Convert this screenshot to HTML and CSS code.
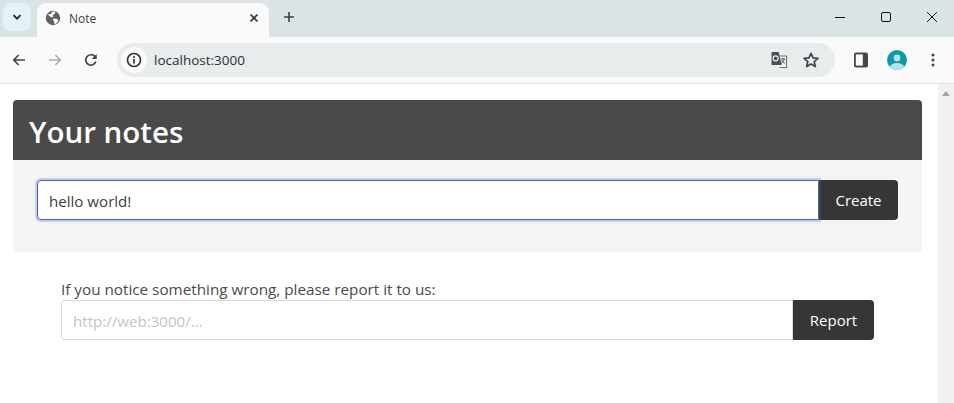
FILE: index.html
```html
<!DOCTYPE html>
<html lang="en">
<head>
<meta charset="utf-8">
<title>Note</title>
<link rel="stylesheet" href="styles.css">
</head>
<body>
<div class="browser">
  <div class="tabstrip">
    <div class="tabsearch">
      <svg width="12" height="12" viewBox="0 0 12 12"><path d="M2.5 4.2 6 7.7l3.5-3.5" fill="none" stroke="#1f2a30" stroke-width="1.9"/></svg>
    </div>
    <div class="tab">
      <svg class="favicon" width="16" height="16" viewBox="0 0 16 16"><circle cx="8" cy="8" r="7.2" fill="#5f6368"/><path d="M3 4.2 6 4l1.5-2.6 3 .2-.8 2.2-2 1.2.6 1.6-1.6.9L4 5.8zM8.6 8.4l3.6.6 1.2 2-2.6 3-1.6-.4-.2-2.6-1.2-1.2z" fill="#fafafa"/></svg>
      <span class="tabtitle">Note</span>
      <svg class="tabclose" width="10" height="10" viewBox="0 0 10 10"><path d="M1.5 1.5l7 7M8.5 1.5l-7 7" stroke="#30353a" stroke-width="1.7"/></svg>
    </div>
    <svg class="newtab" width="12" height="12" viewBox="0 0 12 12"><path d="M6 1v10M1 6h10" stroke="#3c4449" stroke-width="1.6"/></svg>
    <div class="winctrls">
      <svg width="12" height="12" viewBox="0 0 12 12"><path d="M1 6.5h10" stroke="#111" stroke-width="1"/></svg>
      <svg width="12" height="12" viewBox="0 0 12 12"><rect x="1.5" y="1.5" width="9" height="9" rx="1.5" fill="none" stroke="#111" stroke-width="1"/></svg>
      <svg width="12" height="12" viewBox="0 0 12 12"><path d="M1 1l10 10M11 1 1 11" stroke="#111" stroke-width="1"/></svg>
    </div>
  </div>
  <div class="toolbar">
    <svg class="navicon" width="16" height="16" viewBox="0 0 16 16"><path d="M14 8H3M7.6 3 2.8 8l4.8 5" fill="none" stroke="#41474c" stroke-width="1.7"/></svg>
    <svg class="navicon" width="16" height="16" viewBox="0 0 16 16"><path d="M2 8h11M8.4 3l4.8 5-4.8 5" fill="none" stroke="#a9adb0" stroke-width="1.7"/></svg>
    <svg class="navicon" width="16" height="16" viewBox="0 0 16 16"><path d="M12.9 9.6A5.2 5.2 0 1 1 11.8 4.4L13 5.8" fill="none" stroke="#41474c" stroke-width="1.7"/><path d="M13.7 2v5h-5z" fill="#41474c"/></svg>
    <div class="omnibox">
      <div class="siteinfo">
        <svg width="16" height="16" viewBox="0 0 16 16"><circle cx="8" cy="8" r="6.5" fill="none" stroke="#2c3135" stroke-width="1.6"/><path d="M8 7v4.4" stroke="#2c3135" stroke-width="1.7"/><circle cx="8" cy="4.9" r="1" fill="#2c3135"/></svg>
      </div>
      <span class="url">localhost:3000</span>
      <svg class="translate" width="18" height="18" viewBox="0 0 18 18"><path d="M1 1.5h8.5l1 3H16a1 1 0 0 1 1 1V17H7.5l-1-3H1z" fill="#f1f3f4"/><path d="M1.5 1h7.2l3 13H1.5z" fill="#4b5054"/><path d="M8 5h8.5v11.5H9.5" fill="none" stroke="#6c7276" stroke-width="1.1"/><circle cx="5.6" cy="7.4" r="2.5" fill="none" stroke="#e8eaeb" stroke-width="1.2"/><path d="M11 8h4M13 7v1M14.4 8c-.5 2-2 3.6-3.4 4.4M11.8 9.2c.6 1.3 1.8 2.5 3 3" fill="none" stroke="#4b5054" stroke-width="1"/></svg>
      <svg class="star" width="18" height="18" viewBox="0 0 18 18"><path d="M9 2.3l2 4.6 5 .5-3.8 3.3 1.2 4.9L9 13l-4.4 2.6 1.2-4.9L2 7.4l5-.5z" fill="none" stroke="#3f4549" stroke-width="1.7" stroke-linejoin="round"/></svg>
    </div>
    <svg class="sidepanel" width="16" height="16" viewBox="0 0 16 16"><rect x="1" y=".5" width="14" height="15" rx="2" fill="#41474c"/><rect x="2.8" y="2.4" width="7" height="11.2" fill="#fafafa"/></svg>
    <svg class="avatar" width="20" height="20" viewBox="0 0 20 20"><defs><clipPath id="av"><circle cx="10" cy="10" r="10"/></clipPath></defs><g clip-path="url(#av)"><rect width="20" height="20" fill="#0b9aa8"/><circle cx="10" cy="8" r="3.4" fill="#b6e3e6"/><ellipse cx="10" cy="18" rx="7.5" ry="5" fill="#b6e3e6"/></g></svg>
    <svg class="menu" width="4" height="14" viewBox="0 0 4 14"><circle cx="2" cy="2" r="1.5" fill="#41474c"/><circle cx="2" cy="7" r="1.5" fill="#41474c"/><circle cx="2" cy="12" r="1.5" fill="#41474c"/></svg>
  </div>
  <div class="viewport">
    <main class="page">
      <section class="notes">
        <h1 class="notes-title">Your notes</h1>
        <form class="notes-body">
          <div class="inputgroup">
            <input class="field field-focus" type="text" value="hello world!">
            <button class="btn" type="button">Create</button>
          </div>
        </form>
      </section>
      <section class="report">
        <label class="report-label">If you notice something wrong, please report it to us:</label>
        <div class="inputgroup">
          <input class="field" type="text" placeholder="http://web:3000/...">
          <button class="btn" type="button">Report</button>
        </div>
      </section>
    </main>
    <div class="scrollbar">
      <svg width="8" height="5" viewBox="0 0 8 5"><path d="M4 0l4 5H0z" fill="#a3a3a3"/></svg>
    </div>
  </div>
</div>
</body>
</html>
```
FILE: styles.css
```css
* { box-sizing: border-box; }
html, body { margin: 0; height: 100%; overflow: hidden; }
body { font-family: "Open Sans", "Noto Sans", sans-serif; color: #212529; background: #fff; }
.browser { display: flex; flex-direction: column; height: 403px; }

.tabstrip { height: 37px; background: #dbe3e7; display: flex; align-items: flex-start; padding: 3px 0 0 3px; position: relative; }
.tabsearch { width: 28px; height: 28px; border-radius: 8px; background: #e3f2f8; display: flex; align-items: center; justify-content: center; }
.tab { width: 232px; height: 34px; margin-left: 6px; background: #fafafa; border-radius: 9px 9px 0 0; display: flex; align-items: center; padding: 0 10px 4px 8px; }
.favicon { flex: none; }
.tabtitle { font: 12px "Open Sans", sans-serif; color: #3c4043; margin-left: 8px; flex: 1; }
.tabclose { flex: none; }
.newtab { margin: 8px 0 0 14px; }
.winctrls { margin-left: auto; display: flex; gap: 34px; padding: 8px 16px 0 0; }

.toolbar { height: 47px; background: #fafafa; border-bottom: 1px solid #dfe1e2; display: flex; align-items: center; padding: 0 0 1px 11px; }
.navicon { flex: none; margin-right: 20px; }
.navicon + .navicon + .navicon { margin-right: 0; margin-left: 0; }
.omnibox { margin-left: 18px; width: 718px; height: 34px; border-radius: 17px; background: #e9ecec; display: flex; align-items: center; padding: 0 15px 0 4px; }
.siteinfo { width: 26px; height: 26px; border-radius: 50%; background: #fafafa; display: flex; align-items: center; justify-content: center; }
.url { font: 13.5px "Open Sans", sans-serif; color: #2b3035; margin-left: 7px; flex: 1; }
.translate { margin-right: 14px; }
.sidepanel { margin-left: 18px; }
.avatar { margin-left: 18px; }
.menu { margin-left: 24px; }

.viewport { flex: 1; display: flex; min-height: 0; }
.page { flex: 1; padding: 16px 16px 0 13px; background: #fff; }
.scrollbar { width: 16px; background: #f1f1f1; display: flex; justify-content: center; padding-top: 7px; align-items: flex-start; }

.notes { border-radius: 4px; overflow: hidden; }
.notes-title { margin: 0; height: 60px; background: #4a4a4a; color: #fff; font-size: 29.5px; line-height: 64px; font-weight: 600; padding-left: 16px; }
.notes-body { background: #f4f4f4; height: 92px; padding: 20px 24px 0; }

.inputgroup { display: flex; height: 40px; }
.field { flex: 1; min-width: 0; height: 40px; border: 1px solid #d8d8d8; border-radius: 4px 0 0 4px; padding: 2px 11px 0; font: 15.1px "Open Sans", sans-serif; color: #3d3d3d; background: #fff; outline: none; }
.field::placeholder { color: #c4c4c4; }
.field-focus { border-color: #485fc7; box-shadow: 0 0 0 2px rgba(72, 95, 199, .25); position: relative; }
.btn { flex: none; width: 79px; height: 40px; border: 0; border-radius: 0 4px 4px 0; background: #363636; color: #fff; font: 15px "Open Sans", sans-serif; padding: 0; }
.report .btn { width: 81px; }

.report { margin: 26px 48px 0; }
.report-label { display: block; font-size: 15.25px; line-height: 22px; color: #4a4a4a; }
```
